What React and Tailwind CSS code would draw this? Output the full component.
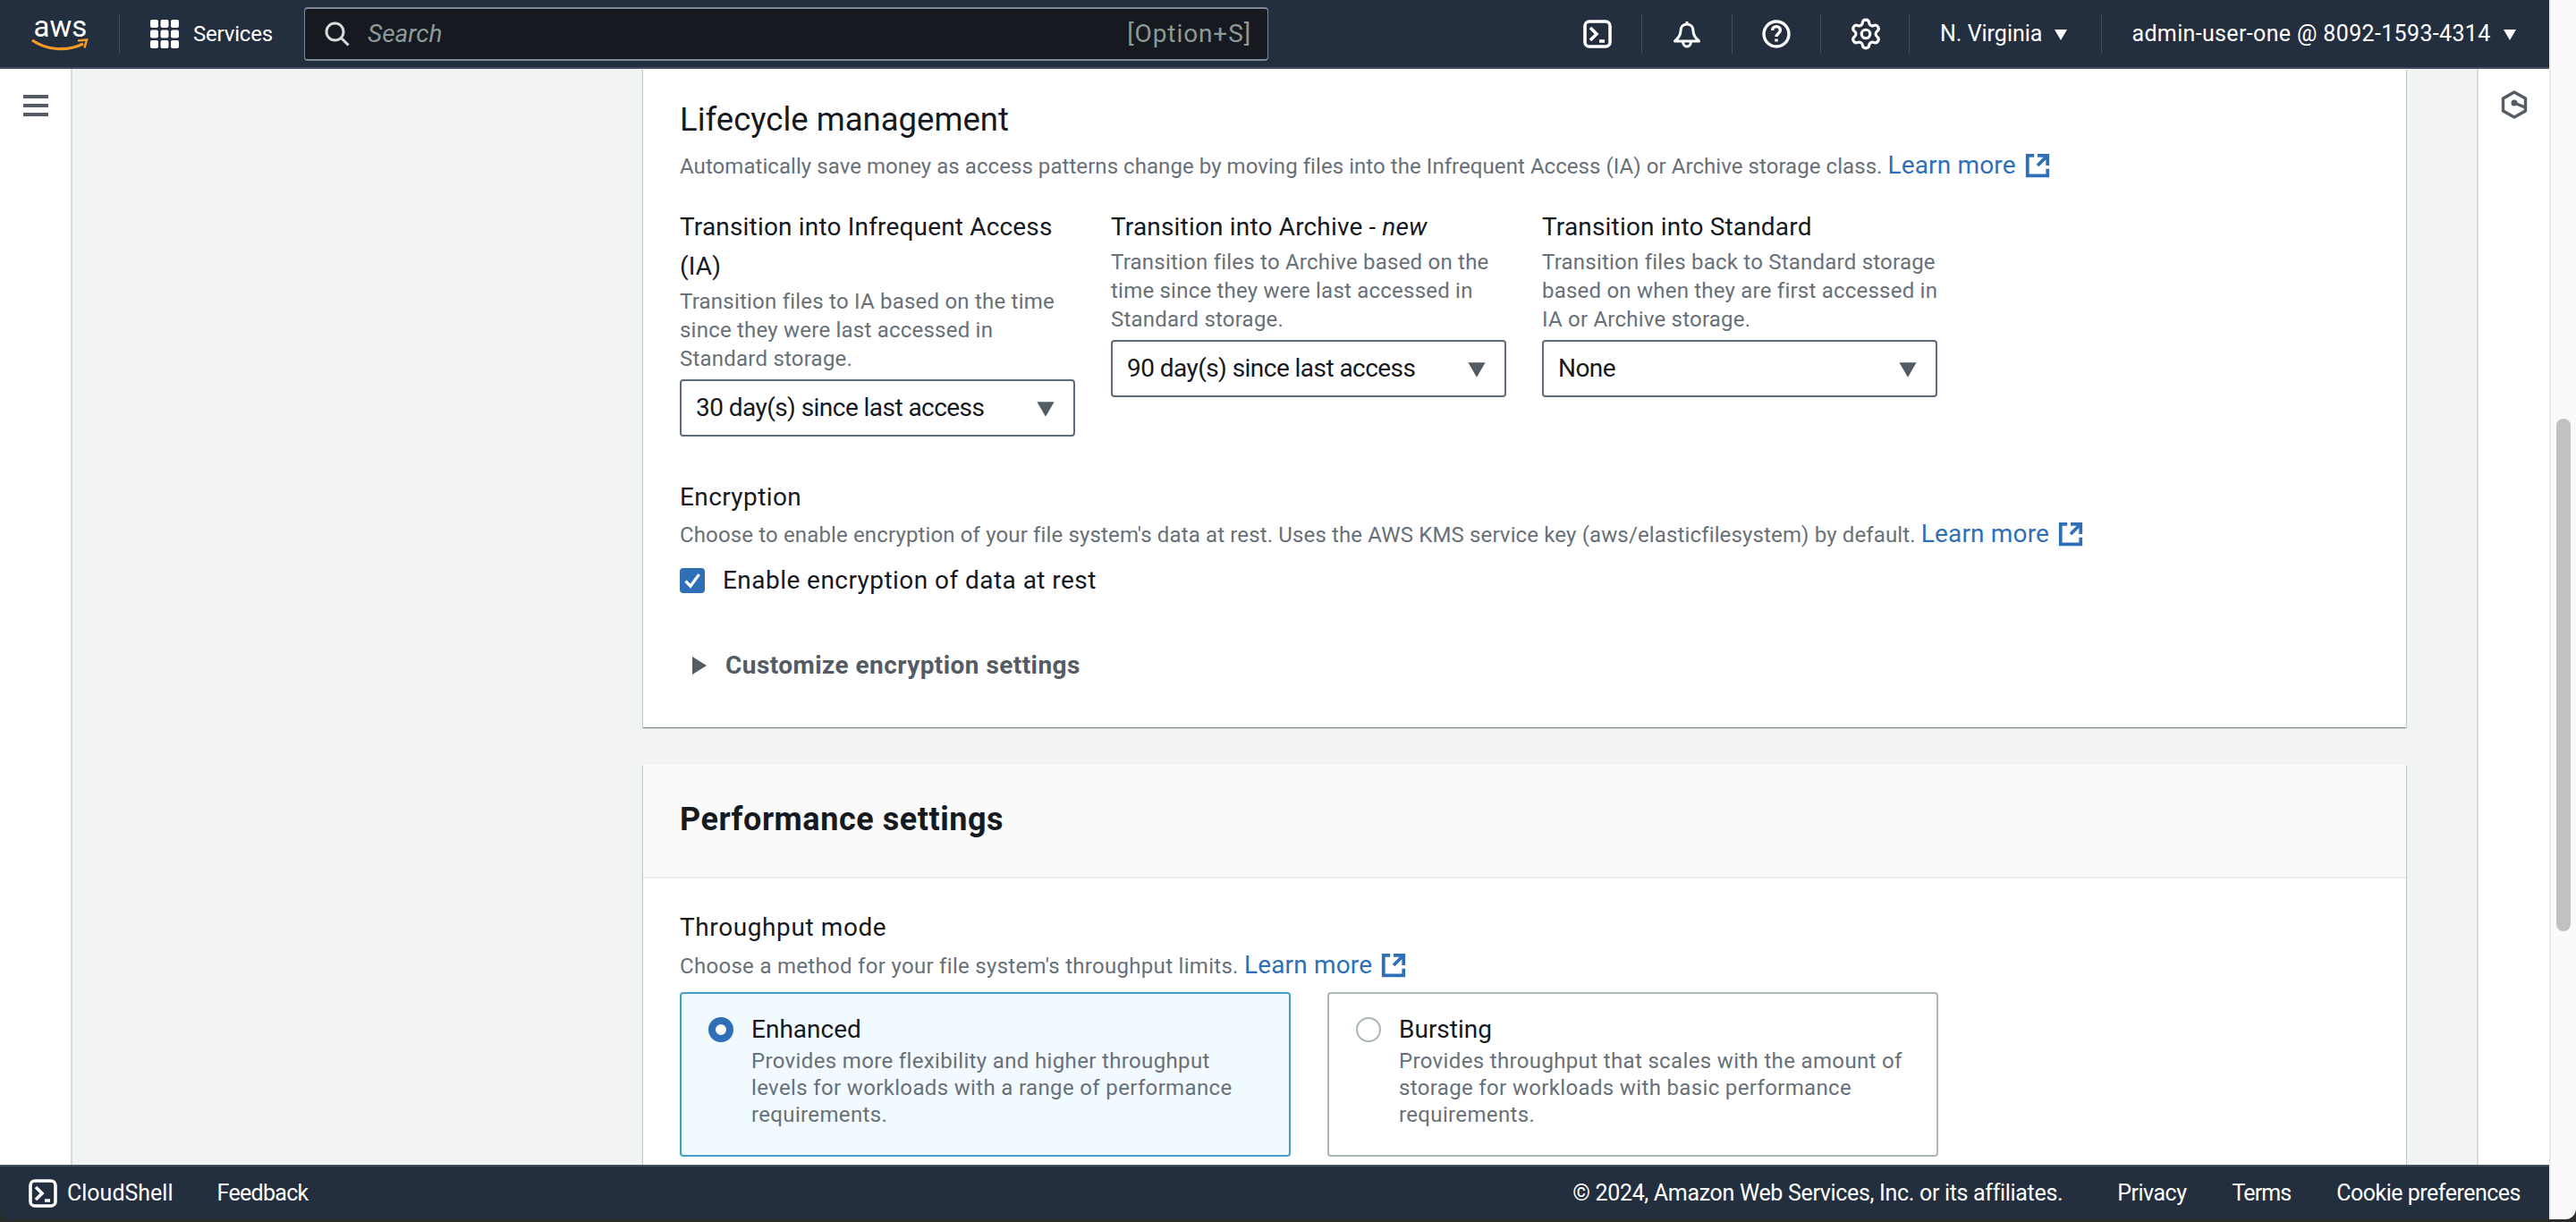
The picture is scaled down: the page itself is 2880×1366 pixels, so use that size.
import React from "react";
import { Settings } from "lucide-react";

const Caret = ({ className }) => (
  <svg viewBox="0 0 16 16" className={className} fill="currentColor"><path d="M1 3h14L8 15z" /></svg>
);
const External = ({ className }) => (
  <svg viewBox="0 0 16 16" className={className} fill="none" stroke="currentColor" strokeWidth="2"><path d="M14 8V2H8M14 2 8 8M6 2H2v12h12v-4" /></svg>
);
const Shell = ({ className }) => (
  <svg viewBox="0 0 16 16" className={className} fill="none" stroke="currentColor" strokeWidth="1.8"><rect x="1" y="1" width="14" height="14" rx="2.5" /><path d="M4 4.500 7.500 8 4 11.500M9 12h3" /></svg>
);

function Learn({ className = "" }) {
  return (
    <a className={"inline-flex items-center gap-[9px] text-[#2e6fb7] text-[28px] tracking-[0.15px] " + className}>
      Learn more
      <External className="w-[30px] h-[30px]" />
    </a>
  );
}

function Field({ label, italic, desc, value, wrap }) {
  return (
    <div className="w-[442px] flex flex-col">
      <div className="text-[28px] leading-[44px] text-[#16191f] tracking-[0.17px]">
        {label}
        {wrap && <br />}
        {wrap && "(IA)"}
        {italic && <span className="italic"> - new</span>}
      </div>
      <div className="text-[24px] leading-[32px] text-[#687078] mt-[1px] tracking-[0.22px] whitespace-nowrap">{desc}</div>
      <div className="mt-[7px] h-[64px] border-2 border-[#5f6b7a] rounded-[4px] flex items-center justify-between pl-[16px] pr-[20px] text-[28px] text-[#16191f] tracking-[-0.55px]">
        {value}
        <Caret className="w-[22px] h-[22px] text-[#545b64]" />
      </div>
    </div>
  );
}

function Radio({ selected, title, lines }) {
  return (
    <div className={"w-[683px] h-[184px] border-2 rounded-[4px] flex pt-[26px] pl-[30px] " + (selected ? "border-[#44a0c9] bg-[#f1faff]" : "border-[#aab7b8] bg-white")}>
      <div className={"w-[28px] h-[28px] rounded-full shrink-0 " + (selected ? "border-[8px] border-[#2e6fb7] bg-white" : "border-2 border-[#aab7b8] bg-white")} />
      <div className="ml-[20px] -mt-[6px]">
        <div className="text-[28px] leading-[40px] text-[#16191f]">{title}</div>
        <div className="text-[24px] leading-[30px] text-[#687078] tracking-[0.35px]">{lines}</div>
      </div>
    </div>
  );
}

const Square = ({ x, y }) => <rect x={x} y={y} width="9" height="9" rx="2" />;

export default function App() {
  return (
    <div className="h-screen w-full overflow-hidden flex flex-col bg-[#2b2b2a] font-['Roboto',sans-serif]">
      <div className="flex flex-1 min-h-0 rounded-b-[12px] overflow-hidden">
        <div className="w-[2850px] flex flex-col min-h-0">
          <header className="h-[77px] shrink-0 bg-[#232f3e] border-b-[2px] border-[#414d5c] flex items-center text-white text-[25px]">
            <div className="w-[65px] ml-[35px] flex flex-col items-center">
              <span className="text-[33px] leading-[24px]">aws</span>
              <svg viewBox="0 0 65 15" className="w-[65px] h-[15px] mt-[1px]"><path d="M1 2c16 11 38 13 57 4" fill="none" stroke="#f79a26" strokeWidth="3.2" /><path d="M52 2.500l10-1-2.500 9" fill="none" stroke="#f79a26" strokeWidth="2.6" /></svg>
            </div>
            <div className="ml-[33px] h-[44px] w-px bg-[#414d5c]" />
            <svg viewBox="0 0 32 32" className="ml-[34px] w-[32px] h-[32px]" fill="white">
              <Square x={0} y={0} /><Square x={11.500} y={0} /><Square x={23} y={0} />
              <Square x={0} y={11.500} /><Square x={11.500} y={11.500} /><Square x={23} y={11.500} />
              <Square x={0} y={23} /><Square x={11.500} y={23} /><Square x={23} y={23} />
            </svg>
            <span className="ml-[16px] w-[124px] text-[24px] tracking-[-0.2px]">Services</span>
            <div className="w-[1078px] h-[60px] border-y-2 border-x border-[#7d8998] rounded-[4px] bg-[#16191f] flex items-center pl-[22px] pr-[18px] text-[28px] text-[#8d9996]">
              <svg viewBox="0 0 28 28" className="w-[28px] h-[28px] text-[#d5dbdb]" fill="none" stroke="currentColor" strokeWidth="3"><circle cx="11.500" cy="11.500" r="9.500" /><path d="M18 18l8.500 8.500" /></svg>
              <span className="ml-[20px] italic flex-1">Search</span>
              <span className="tracking-[0.9px]">[Option+S]</span>
            </div>
            <Shell className="ml-[352px] w-[32px] h-[32px]" />
            <div className="ml-[33px] h-[44px] w-px bg-[#414d5c]" />
            <svg viewBox="0 0 32 32" className="ml-[34px] w-[32px] h-[32px]" fill="none" stroke="white" strokeWidth="3" strokeLinejoin="round"><path d="M16 2v3M16 5c-4.500 0-7 3.500-7 7.500 0 5-2.500 8-6.500 11.500h27c-4-3.500-6.500-6.500-6.500-11.500 0-4-2.500-7.500-7-7.500zM11.500 24c0 3.500 2 6 4.500 6s4.500-2.500 4.500-6" /></svg>
            <div className="ml-[34px] h-[44px] w-px bg-[#414d5c]" />
            <svg viewBox="0 0 16 16" className="ml-[33px] w-[32px] h-[32px]" fill="none" stroke="white" strokeWidth="1.700"><circle cx="8" cy="8" r="7" /><path d="M5.800 6c0-1.300 1-2.200 2.200-2.200s2.200.9 2.200 2.100c0 1.800-2.200 1.900-2.200 3.600M8 10.700v1.600" /></svg>
            <div className="ml-[33px] h-[44px] w-px bg-[#414d5c]" />
            <Settings className="ml-[31px] w-[38px] h-[38px]" strokeWidth={2} />
            <div className="ml-[29px] h-[44px] w-px bg-[#414d5c]" />
            <span className="ml-[34px]">N. Virginia</span>
            <Caret className="ml-[13px] w-[16px] h-[16px]" />
            <div className="ml-[37px] h-[44px] w-px bg-[#414d5c]" />
            <span className="ml-[33px] tracking-[0.35px]">admin-user-one @ 8092-1593-4314</span>
            <Caret className="ml-[13px] w-[16px] h-[16px]" />
          </header>

          <div className="flex flex-1 min-h-0">
            <div className="w-[81px] shrink-0 bg-white border-r-2 border-[#d5dbdb] flex justify-center pt-[29px]">
              <div className="w-[28px] h-[24px] flex flex-col justify-between">
                <div className="h-[4px] bg-[#545b64]" /><div className="h-[4px] bg-[#545b64]" /><div className="h-[4px] bg-[#545b64]" />
              </div>
            </div>
            <main className="flex-1 min-w-0 bg-[#f2f3f3] pl-[638px] overflow-hidden">
              <section className="w-[1971px] h-[736px] bg-white shadow-[0_1px_1px_0_rgba(0,28,36,0.3),1px_1px_1px_0_rgba(0,28,36,0.15),-1px_1px_1px_0_rgba(0,28,36,0.15)] px-[41px] pt-[34px]">
                <h2 className="text-[36.500px] leading-[46px] text-[#16191f]">Lifecycle management</h2>
                <p className="text-[24px] leading-[32px] text-[#687078] mt-[12px] tracking-[0.06px]">Automatically save money as access patterns change by moving files into the Infrequent Access (IA) or Archive storage class. <Learn /></p>
                <div className="flex items-start gap-[40px] mt-[30px]">
                  <Field wrap label="Transition into Infrequent Access" value="30 day(s) since last access" desc={<>Transition files to IA based on the time<br />since they were last accessed in<br />Standard storage.</>} />
                  <Field italic label="Transition into Archive" value="90 day(s) since last access" desc={<>Transition files to Archive based on the<br />time since they were last accessed in<br />Standard storage.</>} />
                  <Field label="Transition into Standard" value="None" desc={<>Transition files back to Standard storage<br />based on when they are first accessed in<br />IA or Archive storage.</>} />
                </div>
                <div className="text-[28px] leading-[40px] text-[#16191f] mt-[48px] tracking-[0.4px]">Encryption</div>
                <p className="text-[24px] leading-[32px] text-[#687078] mt-[5px] tracking-[0.14px]">Choose to enable encryption of your file system's data at rest. Uses the AWS KMS service key (aws/elasticfilesystem) by default. <Learn /></p>
                <label className="flex items-center mt-[15px]">
                  <span className="w-[28px] h-[28px] rounded-[4px] bg-[#2e6fb7] flex items-center justify-center">
                    <svg viewBox="0 0 16 16" className="w-[22px] h-[22px]" fill="none" stroke="white" strokeWidth="2.400"><path d="M2.500 8.500 6.500 12.500 13.500 3" /></svg>
                  </span>
                  <span className="ml-[20px] text-[28px] leading-[40px] text-[#16191f] tracking-[0.45px]">Enable encryption of data at rest</span>
                </label>
                <div className="flex items-center mt-[55px] ml-[14px]">
                  <svg viewBox="0 0 16 20" className="w-[16px] h-[20px] text-[#545b64]" fill="currentColor"><path d="M0 0 16 10 0 20z" /></svg>
                  <span className="ml-[21px] text-[28px] leading-[40px] font-bold text-[#545b64] tracking-[0.44px]">Customize encryption settings</span>
                </div>
              </section>
              <section className="mt-[42px] w-[1971px] bg-white shadow-[0_1px_1px_0_rgba(0,28,36,0.3),1px_1px_1px_0_rgba(0,28,36,0.15),-1px_1px_1px_0_rgba(0,28,36,0.15)]">
                <div className="h-[127px] bg-[#fafafa] border-b-2 border-[#eaeded] flex items-center px-[41px] pb-[3px]">
                  <h2 className="text-[36px] font-bold text-[#16191f] tracking-[0.55px]">Performance settings</h2>
                </div>
                <div className="px-[41px] pt-[35px] pb-[40px]">
                  <div className="text-[28px] leading-[40px] text-[#16191f] tracking-[0.6px]">Throughput mode</div>
                  <p className="text-[24px] leading-[32px] text-[#687078] mt-[6px] tracking-[0.3px]">Choose a method for your file system's throughput limits. <Learn /></p>
                  <div className="flex gap-[41px] mt-[13px]">
                    <Radio selected title="Enhanced" lines={<>Provides more flexibility and higher throughput<br />levels for workloads with a range of performance<br />requirements.</>} />
                    <Radio title="Bursting" lines={<>Provides throughput that scales with the amount of<br />storage for workloads with basic performance<br />requirements.</>} />
                  </div>
                </div>
              </section>
            </main>
            <div className="w-[81px] shrink-0 bg-white border-l-2 border-[#d5dbdb] flex justify-center pt-[24px]">
              <svg viewBox="0 0 30 32" className="w-[30px] h-[32px]" fill="none" stroke="#545b64" strokeWidth="3.400" strokeLinejoin="round"><path d="M15 2 27.500 9v14L15 30 2.500 23V9z" /><path d="M15 14l12 5" /><circle cx="15" cy="14" r="3.500" fill="#545b64" stroke="none" /></svg>
            </div>
          </div>

          <footer className="h-[61px] shrink-0 bg-[#232f3e] border-t-2 border-[#414d5c] flex items-center text-white text-[25px]">
            <Shell className="ml-[32px] w-[32px] h-[32px]" />
            <span className="ml-[11px]">CloudShell</span>
            <span className="ml-[49px] tracking-[-0.7px]">Feedback</span>
            <span className="ml-auto tracking-[-0.32px]">© 2024, Amazon Web Services, Inc. or its affiliates.</span>
            <span className="ml-[61px] tracking-[-0.5px]">Privacy</span>
            <span className="ml-[51px] tracking-[-0.9px]">Terms</span>
            <span className="ml-[51px] mr-[32px] tracking-[-0.5px]">Cookie preferences</span>
          </footer>
        </div>
        <div className="w-[30px] shrink-0 bg-[#fafafa] border-l-2 border-[#ececec] pl-[6px] pt-[468px]">
          <div className="w-[16px] h-[573px] rounded-full bg-[#c1c1c1]" />
        </div>
      </div>
      <div className="h-[3px] shrink-0" />
    </div>
  );
}
